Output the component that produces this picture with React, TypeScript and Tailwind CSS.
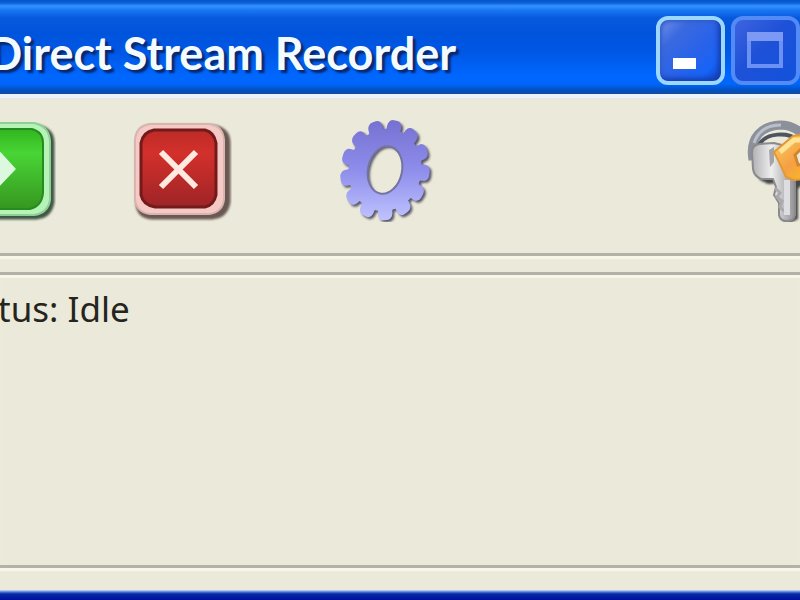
import React from 'react';

const RecordIcon = () => (
  <svg viewBox="0 0 104 104" className="block w-[104px] h-[104px]">
    <defs>
      <linearGradient id="green" x1="0" y1="0" x2="0" y2="1">
        <stop offset="0" stopColor="#32b51f" />
        <stop offset="0.3" stopColor="#49d536" />
        <stop offset="1" stopColor="#36961f" />
      </linearGradient>
      <filter id="soft"><feGaussianBlur stdDeviation="1" /></filter>
    </defs>
    <path d="M24 9H84Q100 11 100 25V84Q98 98 84 99H24Q8 98 8 84V25Q8 10 24 9Z" fill="#3f5744" stroke="#3f5744" strokeWidth="5" filter="url(#soft)" />
    <path d="M22 5H82Q97 8 98 23V82Q96 95 82 97H22Q7 95 6 82V23Q7 7 22 5Z" fill="#b5f3b7" stroke="#90cf96" strokeWidth="2" />
    <path d="M24 11H80Q91 14 91 25V75Q90 88 78 91H24L12 78V24Z" fill="url(#green)" stroke="#278c20" strokeWidth="2" />
    <path d="M43 28L64 51L43 73Z" fill="#dcf8df" />
  </svg>
);

const StopIcon = () => (
  <svg viewBox="0 0 104 104" className="block w-[104px] h-[104px]">
    <defs>
      <linearGradient id="red" x1="0" y1="0" x2="0" y2="1">
        <stop offset="0" stopColor="#bd2b27" />
        <stop offset="0.3" stopColor="#d3302b" />
        <stop offset="1" stopColor="#9e2427" />
      </linearGradient>
    </defs>
    <path d="M24 9H84Q100 11 100 25V84Q98 98 84 99H24Q10 98 10 84V25Q10 10 24 9Z" fill="#6b5955" stroke="#6b5955" strokeWidth="5" filter="url(#soft)" />
    <path d="M22 6H81Q95 8 96 22V81Q95 94 81 96H22Q8 94 7 81V22Q8 8 22 6Z" fill="#f5c9c5" stroke="#d9b5ae" strokeWidth="2" />
    <path d="M26 12H77Q86 14 88 25V77Q86 87 77 89H27Q15 87 13 77V25Q15 14 26 12Z" fill="url(#red)" stroke="#731b1b" strokeWidth="3" />
    <path d="M33 34L68 69M68 34L33 69" stroke="#ffe9e0" strokeWidth="6" />
  </svg>
);

const teeth = Array.from({ length: 13 }, (_, i) => (i * 360) / 13);

const GearShape = () => (
  <>
    <path fillRule="evenodd" fill="currentColor" d="M0 -41A41 41 0 1 1 0 41A41 41 0 1 1 0 -41ZM0 -24A19 24 0 1 0 0 24A19 24 0 1 0 0 -24Z" />
    {teeth.map((angle) => (
      <rect key={angle} x="-8" y="-50" width="16" height="18" rx="6" fill="currentColor" transform={`rotate(${angle})`} />
    ))}
  </>
);

const GearIcon = () => (
  <svg viewBox="0 0 104 104" className="block w-[104px] h-[104px]">
    <defs>
      <linearGradient id="gearFill" x1="0" y1="0" x2="0" y2="1">
        <stop offset="0" stopColor="#7470d0" />
        <stop offset="0.5" stopColor="#8e8deb" />
        <stop offset="1" stopColor="#c0c5ff" />
      </linearGradient>
      <mask id="gearMask">
        <g color="#ffffff" transform="translate(51 52) rotate(12) scale(0.89 1.01)"><GearShape /></g>
      </mask>
    </defs>
    <g color="#555566" transform="translate(53 54) rotate(12) scale(0.89 1.01)" filter="url(#soft)"><GearShape /></g>
    <rect width="104" height="104" fill="url(#gearFill)" mask="url(#gearMask)" />
    <ellipse cx="51" cy="52" rx="17" ry="24" transform="rotate(12 51 52)" fill="none" stroke="#74749e" strokeWidth="2" />
  </svg>
);

const KeysIcon = () => (
  <svg viewBox="0 0 104 104" className="block w-[104px] h-[104px]">
    <defs>
      <linearGradient id="silver">
        <stop offset="0" stopColor="#b0b0b4" />
        <stop offset="0.45" stopColor="#eeeeef" />
        <stop offset="1" stopColor="#929295" />
      </linearGradient>
      <linearGradient id="gold" x1="0" y1="0" x2="1" y2="1">
        <stop offset="0" stopColor="#ffd060" />
        <stop offset="0.5" stopColor="#f4a044" />
        <stop offset="1" stopColor="#ffc414" />
      </linearGradient>
    </defs>
    <path d="M12 53L16 62L24 66L36 65L33 73L38 80L37 101L44 106L54 101L54 71L63 61L55 49Z" fill="#474747" filter="url(#soft)" />
    <path d="M9 42C5 19 18 8 36 7C49 7 57 13 66 25" fill="none" stroke="#8b909a" strokeWidth="9" />
    <path d="M10 25C14 13 24 7 37 7" fill="none" stroke="#b9bfc9" strokeWidth="3" />
    <path d="M15 27C22 14 44 14 54 22" fill="none" stroke="#4d5360" strokeWidth="4" />
    <path d="M8 34Q8 27 16 26L30 25L50 30L51 67V97Q50 103 43 103Q36 103 35 97V85L30 77L32 69L29 61L17 61Q10 58 9 51Z" fill="url(#silver)" stroke="#8b8b8d" strokeWidth="2" strokeLinejoin="round" />
    <path d="M25 32L30 29V44L26 49Z" fill="#a4a4a7" />
    <path d="M31 70L36 75L33 79L38 83L36 89L40 93" fill="none" stroke="#aaaaad" strokeWidth="3" />
    <path d="M43 62V97" stroke="#dedee2" strokeWidth="6" />
    <path d="M30 34L49 18L61 16L78 34L70 60L50 62L42 59L35 44Z" fill="url(#gold)" stroke="#e09a38" strokeWidth="2" strokeLinejoin="round" />
    <path d="M51 37L57 31H66V46L54 47Z" fill="#ebe9d9" stroke="#d3852b" strokeWidth="3" />
    <path d="M36 34L50 22H62" fill="none" stroke="#ffe397" strokeWidth="5" />
  </svg>
);

const TitleBar: React.FC = () => (
  <header className="h-[98px] shrink-0 flex items-start border-b-4 border-[#edf3fc] bg-[linear-gradient(to_bottom,#0754c8_0px,#0a62df_3px,#3593ff_6px,#1978f5_10px,#0758dc_18px,#0054dc_34px,#0057e5_52px,#0067ff_76px,#0066fa_84px,#0051c4_90px,#164a9b_94px)]">
    <h1 className="-ml-3 pt-[29px] font-['Lato','Open_Sans',sans-serif] font-bold text-[45px] leading-[48px] text-[#f4fbff] whitespace-nowrap [text-shadow:3px_3px_2px_#08286f]">
      Direct Stream Recorder
    </h1>
    <div className="ml-auto mt-4 flex gap-1.5 shrink-0">
      <button
        aria-label="Minimize"
        className="w-[69px] h-[69px] rounded-xl border-4 border-[#9bd7ff] bg-[linear-gradient(135deg,#7894ed_0%,#3b69e0_25%,#2662eb_60%,#1764f7_80%,#0f43c4_100%)] shadow-[inset_-3px_-3px_5px_#163fae,inset_2px_2px_4px_#365fca]"
      >
        <svg viewBox="0 0 61 61" className="block w-full h-full">
          <rect x="13" y="38" width="23" height="11" fill="#ffffff" />
        </svg>
      </button>
      <button
        aria-label="Maximize"
        disabled
        className="w-[69px] h-[69px] rounded-xl border-4 border-[#528bf5] bg-[linear-gradient(135deg,#3d64df_0%,#1e51d7_45%,#1252dd_100%)]"
      >
        <svg viewBox="0 0 61 61" className="block w-full h-full">
          <rect x="14" y="14" width="32" height="32" fill="none" stroke="#6b91f5" strokeWidth="4" />
          <rect x="12" y="12" width="36" height="9" fill="#7b99f5" />
        </svg>
      </button>
    </div>
  </header>
);

const Toolbar: React.FC = () => (
  <div className="flex items-start h-[158px] shrink-0 pt-5 border-b-3 border-[#b4b2a6] shadow-[0_3px_1px_#f8f6e8]">
    <button aria-label="Record" className="-ml-[48px] shrink-0"><RecordIcon /></button>
    <button aria-label="Stop" className="ml-[72px] shrink-0"><StopIcon /></button>
    <button aria-label="Settings" className="ml-[102px] shrink-0"><GearIcon /></button>
    <button aria-label="Register" className="ml-auto -mr-[48px] shrink-0"><KeysIcon /></button>
  </div>
);

const App: React.FC = () => {
  return (
    <div className="min-h-screen flex flex-col overflow-hidden bg-[#ebe9d9]">
      <TitleBar />
      <Toolbar />
      <main className="grow mt-4 mb-[22px] border-y-3 border-[#b4b2a6] shadow-[0_3px_1px_#f8f6e8,inset_0_3px_1px_#f8f6e8]">
        <p className="-ml-0.5 pt-3 font-['Noto_Sans',sans-serif] text-[35px] leading-[44px] text-[#252520]">
          tus: Idle
        </p>
      </main>
      <footer className="h-2.5 shrink-0 bg-[linear-gradient(to_bottom,#d0ddf8_0px,#4e78d8_2px,#0429a5_4px,#00109b_10px)]" />
    </div>
  );
};

export default App;
